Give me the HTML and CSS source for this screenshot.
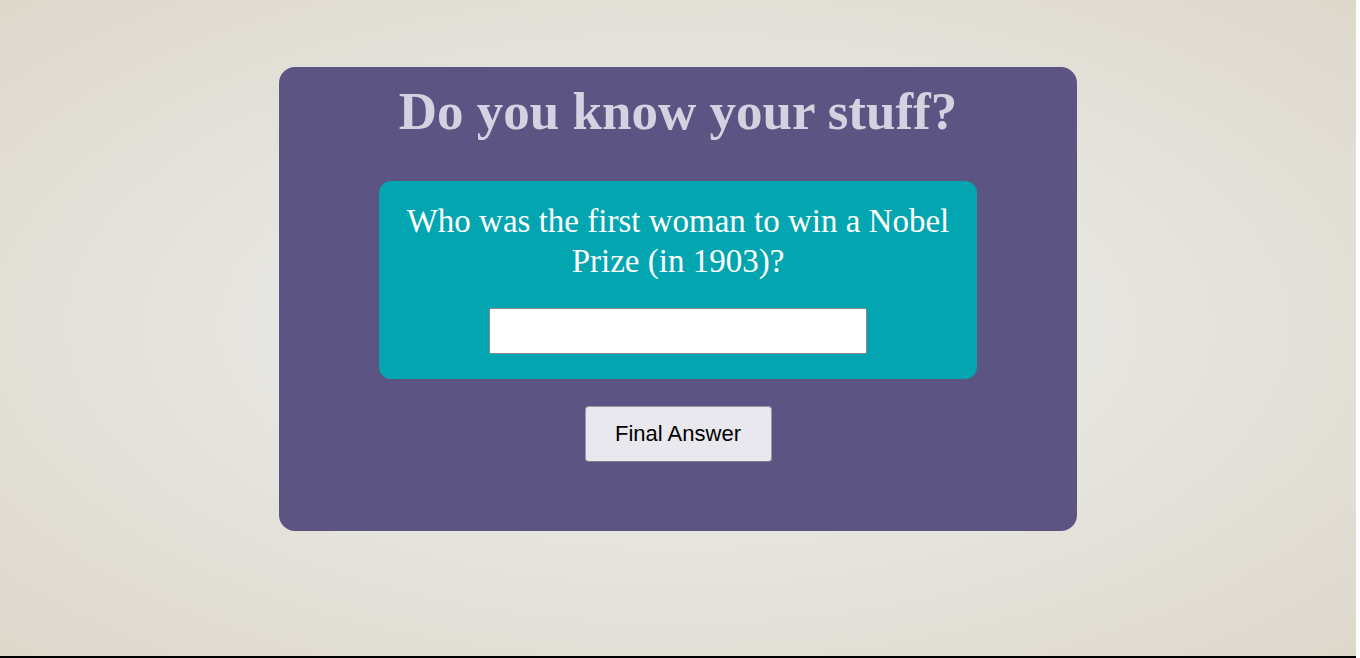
FILE: index.html
```html
<!DOCTYPE html>
<html lang="en">
<head>
<meta charset="utf-8">
<title>Quiz</title>
<link rel="stylesheet" href="styles.css">
</head>
<body>
<div class="page">
  <main class="card">
    <h1 class="title">Do you know your stuff?</h1>
    <section class="question">
      <p class="question-text">Who was the first woman to win a Nobel Prize (in 1903)?</p>
      <input class="answer" type="text" aria-label="Answer">
    </section>
    <button class="submit" type="button">Final Answer</button>
  </main>
</div>
</body>
</html>
```

FILE: styles.css
```css
html {
  background: #ffffff;
}
body {
  margin: 0;
}
.page {
  width: calc(100% - 4px);
  height: 656px;
  border-bottom: 2px solid #000;
  box-sizing: content-box;
  background: radial-gradient(ellipse farthest-corner at 50% 50%, #e9e9e7 0%, #e6e5e0 45%, #ded8cc 100%);
  overflow: hidden;
  display: flex;
  flex-direction: column;
  align-items: center;
}
.card {
  width: 798px;
  box-sizing: border-box;
  margin-top: 67px;
  padding: 13px 0 69px;
  background: #5c5483;
  border-radius: 16px;
  display: flex;
  flex-direction: column;
  align-items: center;
}
.title {
  margin: 0;
  font-family: "Liberation Serif", "Times New Roman", serif;
  font-weight: bold;
  font-size: 53px;
  line-height: 62px;
  color: #d5d1e1;
  text-align: center;
}
.question {
  width: 598px;
  box-sizing: border-box;
  margin-top: 39px;
  padding: 20px 20px 25px;
  background: #02a5b0;
  border-radius: 12px;
  display: flex;
  flex-direction: column;
  align-items: center;
}
.question-text {
  margin: 0;
  font-family: "Liberation Serif", "Times New Roman", serif;
  font-size: 33px;
  line-height: 40px;
  color: #ffffff;
  text-align: center;
}
.answer {
  width: 378px;
  height: 46px;
  box-sizing: border-box;
  margin-top: 27px;
  border: 1px solid #8a8a90;
  border-radius: 2px;
  background: #ffffff;
  padding: 0 8px;
  font-family: "Liberation Sans", Arial, sans-serif;
  font-size: 20px;
}
.submit {
  width: 187px;
  height: 56px;
  margin-top: 27px;
  box-sizing: border-box;
  border: 1px solid #9a99a3;
  border-bottom-color: #7e7d86;
  border-radius: 4px;
  background: #e9e8ee;
  font-family: "Liberation Sans", Arial, sans-serif;
  font-size: 22px;
  color: #000000;
  cursor: pointer;
}
```
